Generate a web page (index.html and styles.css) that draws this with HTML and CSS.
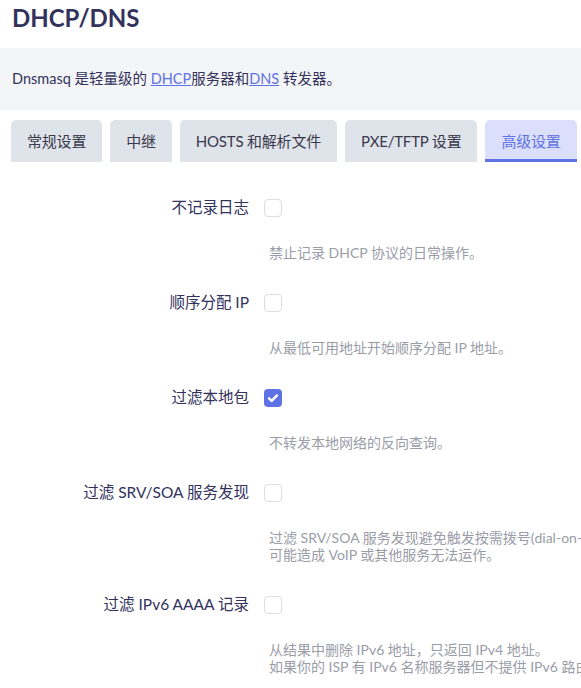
FILE: index.html
```html
<!DOCTYPE html>
<html lang="zh-CN">
<head>
<meta charset="UTF-8">
<meta name="viewport" content="width=device-width, initial-scale=1.0">
<title>DHCP/DNS</title>
<link rel="stylesheet" href="styles.css">
</head>
<body>
  <h2 class="page-title">DHCP/DNS</h2>

  <div class="map-descr">
    Dnsmasq 是轻量级的 <a href="#">DHCP</a>服务器和<a href="#">DNS</a> 转发器。
  </div>

  <ul class="cbi-tabmenu">
    <li><a href="#">常规设置</a></li>
    <li><a href="#">中继</a></li>
    <li><a href="#">HOSTS 和解析文件</a></li>
    <li><a href="#">PXE/TFTP 设置</a></li>
    <li class="active"><a href="#">高级设置</a></li>
  </ul>

  <div class="cbi-section">
    <div class="cbi-value">
      <label class="cbi-value-title">不记录日志</label>
      <div class="cbi-value-field">
        <span class="cbi-checkbox"></span>
        <div class="cbi-value-description">禁止记录 DHCP 协议的日常操作。</div>
      </div>
    </div>

    <div class="cbi-value">
      <label class="cbi-value-title">顺序分配 IP</label>
      <div class="cbi-value-field">
        <span class="cbi-checkbox"></span>
        <div class="cbi-value-description">从最低可用地址开始顺序分配 IP 地址。</div>
      </div>
    </div>

    <div class="cbi-value">
      <label class="cbi-value-title">过滤本地包</label>
      <div class="cbi-value-field">
        <span class="cbi-checkbox checked">
          <svg viewBox="0 0 18 18" width="18" height="18"><path d="M5 9.3l2.7 2.6L13 6.4" fill="none" stroke="#fff" stroke-width="2.4" stroke-linecap="round" stroke-linejoin="round"/></svg>
        </span>
        <div class="cbi-value-description">不转发本地网络的反向查询。</div>
      </div>
    </div>

    <div class="cbi-value">
      <label class="cbi-value-title">过滤 SRV/SOA 服务发现</label>
      <div class="cbi-value-field">
        <span class="cbi-checkbox"></span>
        <div class="cbi-value-description">过滤 SRV/SOA 服务发现避免触发按需拨号(dial-on-demand)链路。<br>可能造成 VoIP 或其他服务无法运作。</div>
      </div>
    </div>

    <div class="cbi-value">
      <label class="cbi-value-title">过滤 IPv6 AAAA 记录</label>
      <div class="cbi-value-field">
        <span class="cbi-checkbox"></span>
        <div class="cbi-value-description">从结果中删除 IPv6 地址，只返回 IPv4 地址。<br>如果你的 ISP 有 IPv6 名称服务器但不提供 IPv6 路由，此选项可能有用。</div>
      </div>
    </div>
  </div>
</body>
</html>
```

FILE: styles.css
```css
html {
  overflow: hidden;
}

body {
  font-family: Lato, "Noto Sans CJK SC", sans-serif;
  margin: 0;
  padding: 0;
  color: #32325d;
  background-color: #fff;
}

.page-title {
  margin: 0;
  padding: 0 12px;
  height: 48px;
  line-height: 36px;
  font-size: 24px;
  font-weight: 700;
}

.map-descr {
  background-color: #f4f5f7;
  padding: 18px 12px;
  height: 26px;
  line-height: 26px;
  font-size: 14.5px;
  white-space: nowrap;
}

.map-descr a {
  color: #5e72e4;
}

/* tabs */
.cbi-tabmenu {
  list-style: none;
  margin: 10px 0 0;
  padding: 0 11px;
  display: flex;
  gap: 8px;
}

.cbi-tabmenu li a {
  display: block;
  height: 42px;
  line-height: 42px;
  padding: 0 16px;
  font-size: 15px;
  letter-spacing: -0.2px;
  color: #3a3a4c;
  text-decoration: none;
  background-color: #dfe3ea;
  border-radius: 5px 5px 0 0;
  white-space: nowrap;
}

.cbi-tabmenu li.active a {
  background-color: #dcdffb;
  color: #5e72e4;
  height: 39px;
  border-bottom: 3px solid #5e72e4;
}

/* option rows */
.cbi-section {
  padding-top: 30px;
}

.cbi-value {
  display: flex;
  padding-bottom: 26px;
}

.cbi-value-title {
  flex: 0 0 249px;
  text-align: right;
  font-size: 15.5px;
  line-height: 30px;
  white-space: nowrap;
}

.cbi-value-field {
  margin-left: 15px;
}

.cbi-checkbox {
  display: block;
  box-sizing: border-box;
  width: 18px;
  height: 18px;
  margin-top: 7px;
  border: 1px solid #dcdde2;
  border-radius: 4px;
  background-color: #fff;
}

.cbi-checkbox.checked {
  border: none;
  background-color: #5e72e4;
}

.cbi-checkbox svg {
  display: block;
}

.cbi-value-description {
  margin-top: 27px;
  padding-left: 5px;
  font-size: 14px;
  line-height: 17px;
  color: #9a9ca8;
  white-space: nowrap;
}
```
